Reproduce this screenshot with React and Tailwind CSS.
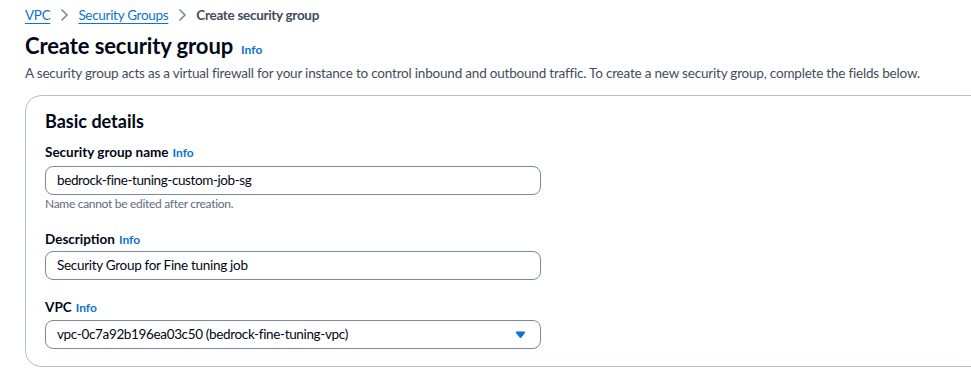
import React from "react";

function Info() {
  return <span className="ml-[4px] text-[12px] font-bold text-[#0972d3] tracking-normal">Info</span>;
}

function Chevron() {
  return (
    <svg width="16" height="16" viewBox="0 0 16 16" className="mx-[6px]" fill="none">
      <path d="M5.5 2.5l5.5 5.5-5.5 5.5" stroke="#7d8998" strokeWidth="1.6" />
    </svg>
  );
}

export default function App() {
  return (
    <div className="w-[971px] h-[375px] overflow-hidden bg-white text-[#000716]" style={{ fontFamily: 'Lato, "Noto Sans", sans-serif' }}>
      <div className="pl-[25px] pt-[4px]">
        <nav className="flex items-center h-[22px] text-[13.5px] tracking-[-0.3px]">
          <span className="text-[#0972d3] underline underline-offset-[3px]">VPC</span>
          <Chevron />
          <span className="text-[#0972d3] underline underline-offset-[3px]">Security Groups</span>
          <Chevron />
          <span className="text-[#414d5c] font-bold">Create security group</span>
        </nav>
        <div className="flex items-baseline mt-[6px]">
          <h1 className="text-[22px] font-bold leading-[28px] tracking-[-0.1px]">Create security group</h1>
          <span className="ml-[8px] text-[12px] font-bold text-[#0972d3]">Info</span>
        </div>
        <p className="text-[13.5px] leading-[20px] text-[#414d5c] mt-[3px] whitespace-nowrap tracking-[-0.2px]">
          A security group acts as a virtual firewall for your instance to control inbound and outbound traffic. To create a new security group, complete the fields below.
        </p>
        <div className="mt-[12px] w-[980px] border border-[#b6bec9] rounded-[16px] pl-[19px] pt-[12px] pb-[17px]">
          <h2 className="text-[18px] font-bold leading-[26px]">Basic details</h2>
          <div className="mt-[8px] w-[496px]">
            <div className="flex items-baseline text-[13.5px] font-bold leading-[20px]">Security group name<Info /></div>
            <div className="mt-[3px] h-[29px] border border-[#7d8998] rounded-[8px] flex items-center px-[11px] text-[13.5px] tracking-[-0.4px]">bedrock-fine-tuning-custom-job-sg</div>
            <div className="mt-[1px] text-[12px] leading-[16px] text-[#5f6b7a] tracking-[-0.3px]">Name cannot be edited after creation.</div>
          </div>
          <div className="mt-[17px] w-[496px]">
            <div className="flex items-baseline text-[13.5px] font-bold leading-[20px]">Description<Info /></div>
            <div className="mt-[1px] h-[29px] border border-[#7d8998] rounded-[8px] flex items-center px-[11px] text-[13.5px] tracking-[-0.3px]">Security Group for Fine tuning job</div>
          </div>
          <div className="mt-[17px] w-[496px]">
            <div className="flex items-baseline text-[13.5px] font-bold leading-[20px]">VPC<Info /></div>
            <div className="mt-[2px] h-[29px] border border-[#7d8998] rounded-[8px] flex items-center justify-between pl-[11px] pr-[14px] text-[13.5px]">
              <span className="tracking-[-0.35px]">vpc-0c7a92b196ea03c50 (bedrock-fine-tuning-vpc)</span>
              <svg width="11" height="8" viewBox="0 0 11 8"><path d="M1 1h9L5.5 7z" fill="#0972d3" stroke="#0972d3" strokeLinejoin="round" /></svg>
            </div>
          </div>
        </div>
      </div>
    </div>
  );
}
